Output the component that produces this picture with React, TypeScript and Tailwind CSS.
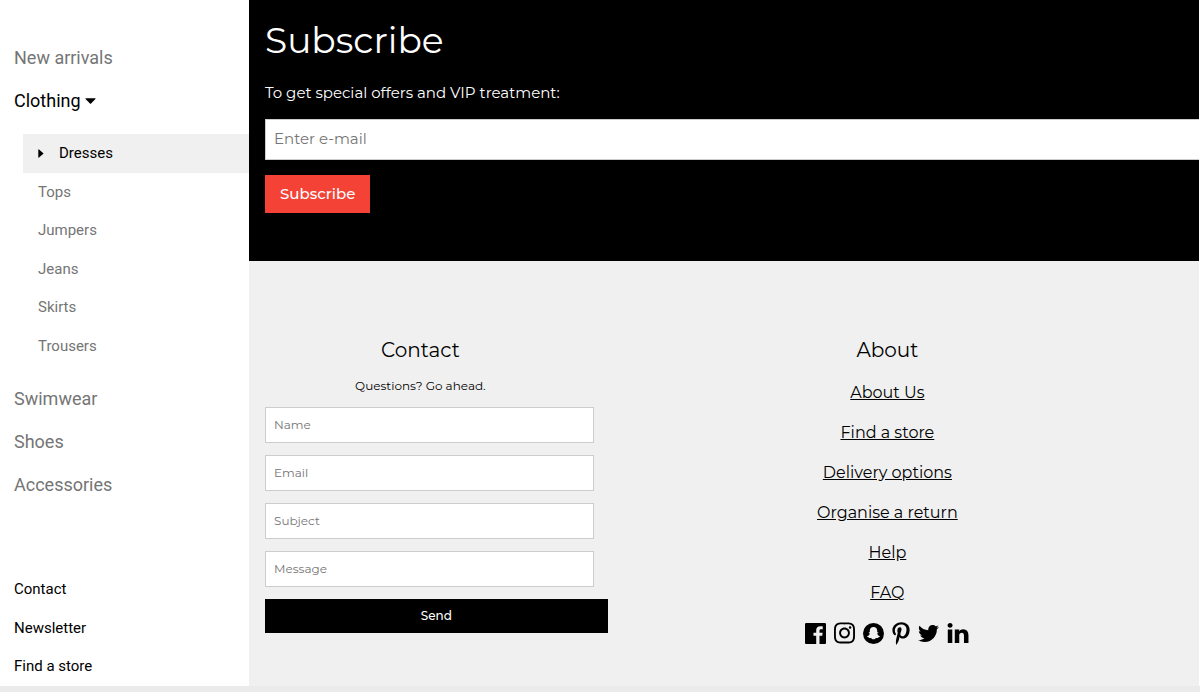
import React from "react";
import { FaInstagram, FaPinterestP, FaTwitter } from "react-icons/fa";

const clothing = ["Tops", "Jumpers", "Jeans", "Skirts", "Trousers"];
const sections = ["Swimwear", "Shoes", "Accessories"];
const shortcuts = ["Contact", "Newsletter", "Find a store"];
const fields = ["Name", "Email", "Subject", "Message"];
const aboutLinks = ["About Us", "Find a store", "Delivery options", "Organise a return", "Help", "FAQ"];

function FacebookIcon() {
  return (
    <svg viewBox="128 128 1536 1536" className="h-[21px] w-[21px]" fill="currentColor" aria-hidden="true">
      <path d="M1579 128q35 0 60 25t25 60v1366q0 35-25 60t-60 25h-391v-595h199l30-232h-229v-148q0-56 23.500-84t91.500-28l122-1v-207q-63-9-178-9-136 0-217.500 80t-81.500 226v171h-200v232h200v595h-735q-35 0-60-25t-25-60v-1366q0-35 25-60t60-25h1366z" />
    </svg>
  );
}

function SnapchatIcon() {
  return (
    <svg viewBox="0 0 42 42" className="h-[21px] w-[21px]" aria-hidden="true">
      <circle cx="21" cy="21" r="21" fill="currentColor" />
      <path
        fill="#f0f0f0"
        d="M21 8c-4.600 0-7.500 3-7.500 7.300 0 1.100.1 2.200.2 3.200-.8.500-2-.5-2.500.2-.6 1 2.300 1.600 2.200 2.700-.3 1.800-2.500 4.400-5 5-.5.200-.4.600-.1.900.9.700 2.300.8 3 1.100.4.300.2 1.300.7 1.500.8.300 2-.3 3.300 0 1.900.5 2.800 2.600 5.700 2.600s3.800-2.100 5.700-2.600c1.300-.3 2.500.3 3.300 0 .5-.2.300-1.200.7-1.500.7-.3 2.100-.4 3-1.100.3-.3.400-.7-.1-.9-2.500-.6-4.700-3.200-5-5-.1-1.100 2.800-1.700 2.200-2.700-.5-.7-1.700.3-2.500-.2.100-1 .2-2.100.2-3.200C28.500 11 25.600 8 21 8z"
      />
    </svg>
  );
}

function LinkedInIcon() {
  return (
    <svg viewBox="128 148 1536 1468" className="h-5 w-[22px]" fill="currentColor" aria-hidden="true">
      <path d="M477 625v991h-330v-991h330zm21-306q1 73-50.500 122t-135.500 49h-2q-82 0-132-49t-50-122q0-74 51.500-122.500t134.500-48.500 133 48.500 51 122.500zm1166 729v568h-329v-530q0-105-40.500-164.500t-126.500-59.500q-63 0-105.500 34.500t-63.500 85.500q-11 30-11 81v553h-329q2-399 2-647t-1-296l-1-48h329v144h-2q20-32 41-56t56.500-52 87-43.500 114.500-15.500q171 0 275 113.500t104 332.500z" />
    </svg>
  );
}

function Sidebar() {
  return (
    <nav className="w-[249px] shrink-0 bg-white pt-9 font-['Roboto',sans-serif]">
      <div className="text-[18px] leading-normal text-[#757575]">
        <a href="#new" className="block px-[14px] py-2">New arrivals</a>
        <button type="button" className="flex w-full items-center gap-1 px-[14px] py-2 text-left text-black">
          Clothing
          <svg viewBox="0 0 12 6" className="h-[6px] w-[11px]" fill="currentColor" aria-hidden="true">
            <path d="M1 0h10q1 0 .4.800L6.600 5.700q-.6.500-1.200 0L.6.800Q0 0 1 0z" />
          </svg>
        </button>
        <div className="my-3 pl-[23px] text-[15px]">
          <a href="#dresses" className="flex items-center gap-[15px] bg-[#f0f0f0] px-[15px] py-2 text-black">
            <svg viewBox="0 0 6 10" className="h-[9px] w-[6px]" fill="currentColor" aria-hidden="true">
              <path d="M0 1q0-1 .8-.4l4.800 4q.5.400 0 .8l-4.800 4Q0 10 0 9z" />
            </svg>
            Dresses
          </a>
          {clothing.map((item) => (
            <a key={item} href={"#" + item} className="block px-[15px] py-2">{item}</a>
          ))}
        </div>
        {sections.map((item) => (
          <a key={item} href={"#" + item} className="block px-[14px] py-2">{item}</a>
        ))}
      </div>
      <div className="pt-16 text-[15px] leading-normal text-black">
        {shortcuts.map((item) => (
          <a key={item} href={"#" + item} className="block px-[14px] py-2">{item}</a>
        ))}
      </div>
    </nav>
  );
}

function Subscribe() {
  return (
    <section className="bg-black pt-[13px] pb-12 pl-4 text-white">
      <h1 className="text-[36px] leading-[54px]">Subscribe</h1>
      <p className="mt-[14px] text-[15px] leading-6">To get special offers and VIP treatment:</p>
      <form className="mt-[14px]" onSubmit={(e) => e.preventDefault()}>
        <input
          type="email"
          aria-label="Enter e-mail"
          placeholder="Enter e-mail"
          className="block h-[41px] w-full border border-r-0 border-[#ccc] bg-white px-2 pb-0.5 text-[15px] text-black outline-none placeholder:text-[#757575]"
        />
        <button type="submit" className="mt-[15px] block bg-[#f44336] px-[15px] py-2 text-[15px] leading-[22px] font-medium">
          Subscribe
        </button>
      </form>
    </section>
  );
}

function Footer() {
  return (
    <footer className="grid grid-cols-[38fr_62fr] pt-[74px] pr-8 pb-10 pl-4 text-black">
      <section>
        <div className="pr-8 text-center">
          <h2 className="text-[20px] leading-[30px]">Contact</h2>
          <p className="mt-3 text-[12px] leading-[18px]">Questions? Go ahead.</p>
        </div>
        <form className="mt-3 flex flex-col gap-3 text-[12px]" onSubmit={(e) => e.preventDefault()}>
          {fields.map((field) => (
            <input
              key={field}
              type="text"
              aria-label={field}
              placeholder={field}
              className="mr-[14px] h-9 border border-[#ccc] bg-white px-2 pb-0.5 outline-none placeholder:text-[#757575]"
            />
          ))}
          <button type="submit" className="bg-black py-2 leading-[18px] font-medium text-white">Send</button>
        </form>
      </section>
      <section className="flex flex-col items-center">
        <h2 className="text-[20px] leading-[30px]">About</h2>
        <ul className="mt-4 flex flex-col items-center gap-4 text-[16px] leading-6">
          {aboutLinks.map((item) => (
            <li key={item}>
              <a href={"#" + item} className="underline">{item}</a>
            </li>
          ))}
        </ul>
        <div className="mt-4 flex items-center gap-2">
          <a href="#facebook" aria-label="Facebook"><FacebookIcon /></a>
          <a href="#instagram" aria-label="Instagram"><FaInstagram className="-mx-px h-6 w-[23px]" /></a>
          <a href="#snapchat" aria-label="Snapchat"><SnapchatIcon /></a>
          <a href="#pinterest" aria-label="Pinterest"><FaPinterestP className="h-[23px] w-[18px]" /></a>
          <a href="#twitter" aria-label="Twitter"><FaTwitter className="h-[21px] w-[21px]" /></a>
          <a href="#linkedin" aria-label="LinkedIn"><LinkedInIcon /></a>
        </div>
      </section>
    </footer>
  );
}

export default function App() {
  return (
    <div className="flex min-h-screen flex-col bg-white">
      <div className="flex grow">
        <Sidebar />
        <main className="mr-px min-w-0 grow bg-[#f0f0f0] font-['Montserrat','Inter',sans-serif]">
          <Subscribe />
          <Footer />
        </main>
      </div>
      <div className="h-1.5 shrink-0 bg-[#ebebeb]" />
    </div>
  );
}
